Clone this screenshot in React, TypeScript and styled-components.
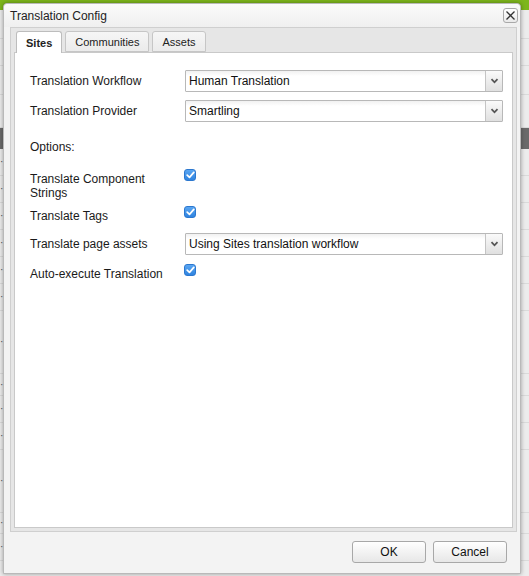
import styled, { createGlobalStyle } from "styled-components";

const GlobalStyle = createGlobalStyle`
    html, body {
        margin: 0;
        padding: 0;
        background: #ececec;
        font-family: "Liberation Sans", Arial, sans-serif;
        font-size: 12px;
        color: #1a1a1a;
    }
`

const Page = styled.div`
    position: relative;
    width: 529px;
    height: 576px;
    overflow: hidden;
    background: #ececec;
`

const TopBar = styled.div`
    height: 10px;
    background: #7db61c;
`

const PageRow = styled.div<{ $h: number; $dark?: boolean }>`
    height: ${p => p.$h}px;
    background: ${p => (p.$dark ? "#6a6a6a" : "transparent")};
    border-bottom: 1px solid ${p => (p.$dark ? "#6a6a6a" : "#dadada")};
    font-size: 10px;
    line-height: ${p => p.$h}px;
    color: #555;
    letter-spacing: 1px;
`

const Dialog = styled.div`
    position: absolute;
    left: 3px;
    top: 3px;
    width: 518px;
    height: 571px;
    box-sizing: border-box;
    display: flex;
    flex-direction: column;
    background: #f3f3f3;
    border: 1px solid #b9b9b9;
    border-radius: 4px 4px 0 0;
    box-shadow: 0 0 4px rgba(0, 0, 0, 0.35);
`

const TitleBar = styled.div`
    height: 23px;
    flex: none;
    display: flex;
    align-items: center;
    justify-content: space-between;
    padding: 0 2px 0 6px;
    background: linear-gradient(#fbfbfb, #efefef);
    border-radius: 4px 4px 0 0;
    font-size: 12px;
    color: #222;
`

const CloseButton = styled.button`
    width: 15px;
    height: 15px;
    padding: 0;
    display: flex;
    align-items: center;
    justify-content: center;
    border: 1px solid #a9a9a9;
    border-radius: 3px;
    background: linear-gradient(#ffffff, #e9e9e9);
`

const Body = styled.div`
    flex: 1;
    display: flex;
    padding: 0 3px 0 6px;
`

const TabBox = styled.div`
    flex: 1;
    display: flex;
    flex-direction: column;
    background: #e6e6e6;
    border: 1px solid #cfcfcf;
    padding: 0 3px 3px 3px;
`

const TabStrip = styled.div`
    display: flex;
    gap: 3px;
    padding: 3px 0 0 2px;
    height: 21px;
`

const Tab = styled.div<{ $active?: boolean }>`
    height: ${p => (p.$active ? 22 : 21)}px;
    box-sizing: border-box;
    padding: 0 9px;
    display: flex;
    align-items: center;
    font-size: 11px;
    font-weight: ${p => (p.$active ? "bold" : "normal")};
    color: #222;
    background: ${p => (p.$active ? "#ffffff" : "linear-gradient(#f6f6f6, #ebebeb)")};
    border: 1px solid ${p => (p.$active ? "#bdbdbd" : "#c6c6c6")};
    border-bottom: ${p => (p.$active ? "none" : "1px solid #c6c6c6")};
    border-radius: 3px 3px 0 0;
    position: relative;
    z-index: ${p => (p.$active ? 1 : 0)};
`

const Panel = styled.div`
    flex: 1;
    background: #ffffff;
    border: 1px solid #c9c9c9;
    padding: 17px 9px 0 15px;
`

const FormRow = styled.div<{ $top?: number; $align?: string }>`
    display: flex;
    align-items: ${p => p.$align ?? "center"};
    margin-top: ${p => p.$top ?? 0}px;
`

const Label = styled.div<{ $pad?: number }>`
    width: 155px;
    flex: none;
    line-height: 14px;
    padding-top: ${p => p.$pad ?? 0}px;
    color: #1a1a1a;
`

const SelectBox = styled.div`
    flex: 1;
    height: 22px;
    box-sizing: border-box;
    display: flex;
    border: 1px solid #b8b8b8;
    border-radius: 1px;
    background: linear-gradient(#f1f1f1, #ffffff 5px);
`

const SelectText = styled.div`
    flex: 1;
    padding-left: 3px;
    line-height: 20px;
    color: #111;
`

const SelectArrow = styled.div`
    width: 16px;
    display: flex;
    align-items: center;
    justify-content: center;
    border-left: 1px solid #c4c4c4;
    background: linear-gradient(#fafafa, #e0e0e0);
`

const Check = styled.div`
    width: 12px;
    height: 12px;
    margin-left: -1px;
    border-radius: 3px;
    background: linear-gradient(#5aa6f2, #2f84e0);
    border: 1px solid #2c78cf;
    box-sizing: border-box;
    display: flex;
    align-items: center;
    justify-content: center;
`

const Footer = styled.div`
    height: 41px;
    box-sizing: border-box;
    flex: none;
    display: flex;
    justify-content: flex-end;
    align-items: flex-start;
    gap: 7px;
    padding: 9px 13px 0 0;
`

const Button = styled.button`
    width: 74px;
    height: 22px;
    border: 1px solid #a8a8a8;
    border-radius: 3px;
    background: linear-gradient(#ffffff, #e7e7e7);
    font-family: "Liberation Sans", Arial, sans-serif;
    font-size: 12px;
    color: #111;
    padding: 0;
`

const Chevron = () => (
    <svg width="9" height="6" viewBox="0 0 9 6">
        <path d="M1.5 1.2 L4.5 4.3 L7.5 1.2" fill="none" stroke="#555" strokeWidth="1.8" />
    </svg>
)

const Tick = () => (
    <svg width="9" height="8" viewBox="0 0 9 8">
        <path d="M1.2 4.2 L3.5 6.4 L7.8 1.4" fill="none" stroke="#fff" strokeWidth="1.7" strokeLinecap="round" strokeLinejoin="round" />
    </svg>
)

const Select: React.FC<{ value: string }> = ({ value }) => (
    <SelectBox>
        <SelectText>{value}</SelectText>
        <SelectArrow><Chevron /></SelectArrow>
    </SelectBox>
)

const CheckRow: React.FC<{ label: string; top: number }> = ({ label, top }) => (
    <FormRow $top={top} $align="flex-start">
        <Label $pad={3}>{label}</Label>
        <Check><Tick /></Check>
    </FormRow>
)

// rows of the list page that sits behind the dialog
const pageRows = [
    { h: 28 }, { h: 26 }, { h: 28 }, { h: 32 }, { h: 20, dark: true },
    { h: 26 }, { h: 26 }, { h: 26 }, { h: 26 }, { h: 26 }, { h: 26 }, { h: 62 },
    { h: 21 }, { h: 26 }, { h: 26 }, { h: 62 }, { h: 20 }, { h: 26 },
]

export default function App() {
    return (
        <>
            <GlobalStyle />
            <Page>
                <TopBar />
                {pageRows.map((r, i) => (
                    <PageRow key={i} $h={r.h} $dark={r.dark}>{i > 4 ? "··" : ""}</PageRow>
                ))}
                <Dialog>
                    <TitleBar>
                        <span>Translation Config</span>
                        <CloseButton aria-label="close">
                            <svg width="11" height="11" viewBox="0 0 11 11">
                                <path d="M1.5 1.5 L9.5 9.5 M9.5 1.5 L1.5 9.5" stroke="#333" strokeWidth="1.3" />
                            </svg>
                        </CloseButton>
                    </TitleBar>
                    <Body>
                        <TabBox>
                            <TabStrip>
                                <Tab $active>Sites</Tab>
                                <Tab>Communities</Tab>
                                <Tab>Assets</Tab>
                            </TabStrip>
                            <Panel>
                                <FormRow>
                                    <Label>Translation Workflow</Label>
                                    <Select value="Human Translation" />
                                </FormRow>
                                <FormRow $top={8}>
                                    <Label>Translation Provider</Label>
                                    <Select value="Smartling" />
                                </FormRow>
                                <FormRow $top={18}>
                                    <Label>Options:</Label>
                                </FormRow>
                                <CheckRow top={15} label="Translate Component Strings" />
                                <CheckRow top={6} label="Translate Tags" />
                                <FormRow $top={10}>
                                    <Label>Translate page assets</Label>
                                    <Select value="Using Sites translation workflow" />
                                </FormRow>
                                <CheckRow top={9} label="Auto-execute Translation" />
                            </Panel>
                        </TabBox>
                    </Body>
                    <Footer>
                        <Button>OK</Button>
                        <Button>Cancel</Button>
                    </Footer>
                </Dialog>
            </Page>
        </>
    );
}
